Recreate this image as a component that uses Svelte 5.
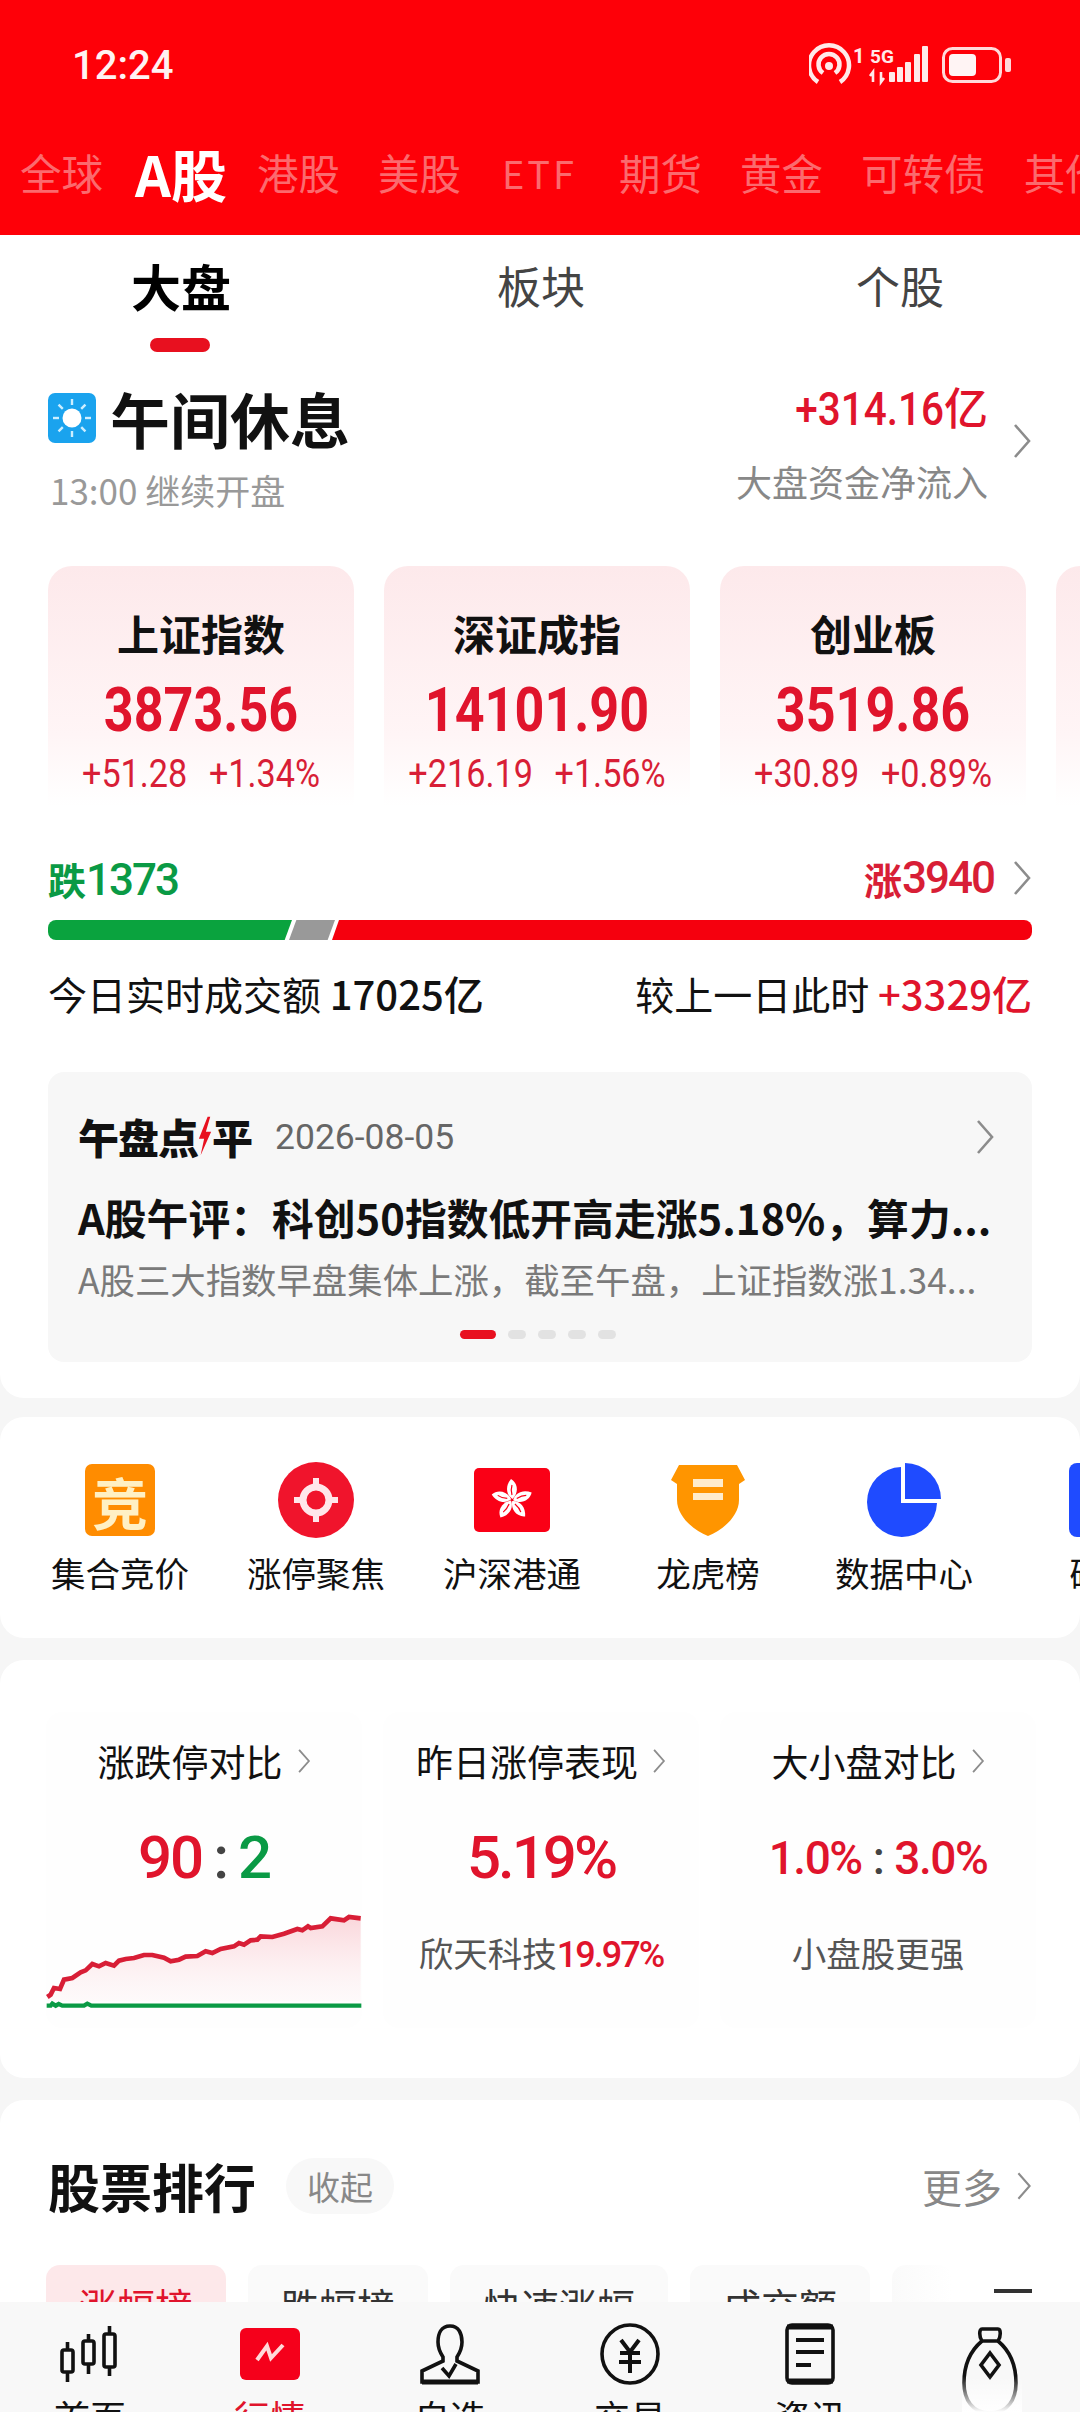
<script>
	const marketTabs = ['全球', 'A股', '港股', '美股', 'ETF', '期货', '黄金', '可转债', '其他'];
	const indexes = [
		{ name: '上证指数', value: '3873.56', diff: '+51.28', pct: '+1.34%' },
		{ name: '深证成指', value: '14101.90', diff: '+216.19', pct: '+1.56%' },
		{ name: '创业板', value: '3519.86', diff: '+30.89', pct: '+0.89%' },
		{ name: '科创50', value: '1402.11', diff: '+69.12', pct: '+5.18%' }
	];
	const rankTabs = ['涨幅榜', '跌幅榜', '快速涨幅', '成交额'];
	const dots = [0, 1, 2, 3];
	const line = '50,412 60,405 70,385 88,388 100,360 125,355 150,338 165,332 185,313 205,320 225,310 250,318 265,303 285,298 310,295 340,286 365,286 400,294 420,305 445,300 465,291 500,289 525,275 545,280 570,268 610,260 625,250 640,255 660,242 680,240 690,230 725,232 760,222 800,208 815,212 832,200 840,205 875,200 900,176 940,182 955,172 990,176';
	const petals = [0, 72, 144, 216, 288];
	const rays = [0, 45, 90, 135, 180, 225, 270, 315];
</script>

{#snippet chevron(w = 20, h = 36)}
	<svg class="chev" width={w} height={h} viewBox="0 0 20 36"><path d="M3 2 L17 18 L3 34" fill="none" stroke="#8c8c8c" stroke-width="2.6" /></svg>
{/snippet}

<div class="page">
	<header class="top">
		<div class="status">
			<span class="time">12:24</span>
			<svg class="status-icons" width="204" height="46" viewBox="808 42 204 46">
				<g fill="none" stroke="#ffe9e9" stroke-width="4.5">
					<path d="M817 82 A20 20 0 1 1 839 82" />
					<path d="M822 73 A10.500 10.500 0 1 1 834 73" />
				</g>
				<circle cx="828" cy="66" r="4" fill="#ffe9e9" />
				<text x="852" y="63" class="st1">1</text>
				<text x="869" y="63" class="st2">5G</text>
				<path d="M872 82V72l-3 4M880 72v10l3-4" fill="none" stroke="#ffe9e9" stroke-width="2.6" />
				<g fill="#ffe9e9">
					<rect x="888" y="72" width="6" height="10" rx="1" />
					<rect x="896" y="67" width="6" height="15" rx="1" />
					<rect x="904" y="62" width="6" height="20" rx="1" />
					<rect x="913" y="54" width="6" height="28" rx="1" />
					<rect x="921" y="46" width="6" height="36" rx="1" />
				</g>
				<rect x="942.5" y="48.500" width="57" height="33" rx="9" fill="none" stroke="#ffd9d9" stroke-width="3" />
				<rect x="948" y="54" width="27" height="22" rx="4" fill="#fff4f4" />
				<rect x="1004" y="58" width="6" height="14" rx="2" fill="#ffd9d9" />
			</svg>
		</div>
		<nav class="markets">
			{#each marketTabs as tab}
				<span class="market" class:on={tab === 'A股'} class:latin={tab === 'ETF'}>{tab}</span>
			{/each}
		</nav>
	</header>

	<section class="overview">
		<div class="subtabs">
			<div class="subtab on">大盘<i></i></div>
			<div class="subtab mid">板块</div>
			<div class="subtab">个股</div>
		</div>

		<div class="session">
			<div>
				<div class="session-title">
					<svg width="48" height="50" viewBox="0 0 48 50">
						<rect width="48" height="50" rx="7" fill="#1aa3ee" />
						<circle cx="24" cy="25" r="9.500" fill="#fff" />
						{#each rays as r}
							<rect x="22.800" y="6" width="2.400" height="6" fill="#cdeeff" transform="rotate({r} 24 25)" />
						{/each}
					</svg>
					<h1>午间休息</h1>
				</div>
				<p class="session-sub">13:00 继续开盘</p>
			</div>
			<div class="flow">
				<div>
					<div class="flow-num"><b>+314.16</b>亿</div>
					<div class="flow-label">大盘资金净流入</div>
				</div>
				{@render chevron()}
			</div>
		</div>

		<div class="cards">
			{#each indexes as item}
				<div class="card">
					<div class="card-name">{item.name}</div>
					<div class="card-value">{item.value}</div>
					<div class="card-sub"><span>{item.diff}</span><span>{item.pct}</span></div>
				</div>
			{/each}
		</div>

		<div class="breadth">
			<span class="fall">跌<b>1373</b></span>
			<span class="rise">涨<b>3940</b>{@render chevron()}</span>
		</div>
		<div class="bar">
			<i class="bar-green"></i>
			<i class="bar-gray"></i>
			<i class="bar-red"></i>
		</div>
		<div class="turnover">
			<span>今日实时成交额 <b>17025亿</b></span>
			<span>较上一日此时 <b class="red">+3329亿</b></span>
		</div>

		<div class="news">
			<div class="news-head">
				<span class="news-logo">午盘点<svg width="14" height="44" viewBox="0 0 16 44"><path d="M11 0L1 25H7L3 44L15 17H9L14 0Z" fill="#e8101f" /></svg>平</span>
				<span class="news-date">2026-08-05</span>
				<span class="news-chev">{@render chevron()}</span>
			</div>
			<div class="news-title">A股午评：科创50指数低开高走涨5.18%，算力...</div>
			<div class="news-text">A股三大指数早盘集体上涨，截至午盘，上证指数涨1.34...</div>
			<div class="news-dots">
				<i class="active"></i>
				{#each dots as d}<i></i>{/each}
			</div>
		</div>
	</section>

	<section class="tools">
		<div class="tool">
			<div class="tool-icon"><span class="jing">竞</span></div>
			<span>集合竞价</span>
		</div>
		<div class="tool">
			<div class="tool-icon">
				<svg width="76" height="78" viewBox="0 0 76 78">
					<circle cx="38" cy="39" r="38" fill="#f0142c" />
					<circle cx="38" cy="39" r="13" fill="none" stroke="#ffe6ea" stroke-width="7" />
					<path d="M38 17v10M38 51v10M16 39h10M50 39h10" stroke="#ffe6ea" stroke-width="6" />
				</svg>
			</div>
			<span>涨停聚焦</span>
		</div>
		<div class="tool">
			<div class="tool-icon">
				<svg width="76" height="64" viewBox="0 0 76 64">
					<rect width="76" height="64" rx="5" fill="#fa0016" />
					{#each petals as r}
						<g transform="rotate({r} 38 32)">
							<path d="M38.500 31 C32 27 31 18 37 11 C44 15 45 25 38.500 31Z" fill="#fff" />
							<path d="M38 27 C37 23 37 20 38 17" fill="none" stroke="#fa0016" stroke-width="1.200" />
						</g>
					{/each}
				</svg>
			</div>
			<span>沪深港通</span>
		</div>
		<div class="tool">
			<div class="tool-icon">
				<svg width="74" height="72" viewBox="0 0 74 72">
					<path d="M8 1H66L74 16L68 20V36C68 52 52 66 37 72C22 66 6 52 6 36V20L0 16Z" fill="#ff9500" />
					<rect x="22" y="15" width="30" height="8" fill="#ffeccc" />
					<rect x="22" y="29" width="30" height="7" fill="#ffeccc" />
				</svg>
			</div>
			<span>龙虎榜</span>
		</div>
		<div class="tool">
			<div class="tool-icon">
				<svg width="74" height="74" viewBox="0 0 74 74">
					<path d="M34 4A35 35 0 1 0 70 40H34Z" fill="#1f4bff" />
					<path d="M38 0A36 36 0 0 1 74 36H38Z" fill="#1f4bff" />
				</svg>
			</div>
			<span>数据中心</span>
		</div>
		<div class="tool last">
			<div class="tool-icon"><span class="blue-box"></span></div>
			<span>破净</span>
		</div>
	</section>

	<section class="compare">
		<div class="cmp">
			<div class="cmp-title">涨跌停对比{@render chevron(14, 28)}</div>
			<div class="cmp-value big"><span class="red">90</span><span class="colon">:</span><span class="green">2</span></div>
			<svg class="spark" width="316" height="100" viewBox="46 160 948 300" preserveAspectRatio="none">
				<defs>
					<linearGradient id="spark-fill" x1="0" y1="0" x2="0" y2="1">
						<stop offset="0" stop-color="#f9c9cf" stop-opacity="0.75" />
						<stop offset="1" stop-color="#fdeef0" stop-opacity="0.25" />
					</linearGradient>
				</defs>
				<polygon points="50,425 {line} 990,425" fill="url(#spark-fill)" />
				<polyline points={line} fill="none" stroke="#d81e36" stroke-width="14" />
				<path d="M48 438 H60 L65 432 L75 438 L84 433 L95 438 H160 L170 432 L182 438 H992" fill="none" stroke="#0a9a45" stroke-width="13" />
			</svg>
		</div>
		<div class="cmp">
			<div class="cmp-title">昨日涨停表现{@render chevron(14, 28)}</div>
			<div class="cmp-value big tight red">5.19%</div>
			<div class="cmp-note">欣天科技<b class="red">19.97%</b></div>
		</div>
		<div class="cmp">
			<div class="cmp-title">大小盘对比{@render chevron(14, 28)}</div>
			<div class="cmp-value mid"><span class="red">1.0%</span><span class="colon">:</span><span class="red">3.0%</span></div>
			<div class="cmp-note">小盘股更强</div>
		</div>
	</section>

	<section class="ranking">
		<div class="rank-head">
			<h2>股票排行</h2>
			<span class="collapse">收起</span>
			<span class="more">更多{@render chevron(16, 32)}</span>
		</div>
		<div class="rank-tabs">
			{#each rankTabs as tab, i}
				<span class="rank-tab" class:on={i === 0}>{tab}</span>
			{/each}
			<span class="rank-tab stub"></span>
			<span class="rank-menu"></span>
		</div>
	</section>

	<footer class="bottom">
		<div class="nav-item">
			<svg width="60" height="56" viewBox="0 0 60 56" fill="none" stroke="#111" stroke-width="3.600">
				<rect x="2" y="24" width="11" height="22" rx="2" /><path d="M7.500 16V24M7.500 46V56" />
				<rect x="23" y="15" width="11" height="23" rx="2" /><path d="M28.500 8V15M28.500 38V48" />
				<rect x="44" y="8" width="11" height="33" rx="2" /><path d="M49.500 0V8M49.500 41V50" />
			</svg>
			<span>首页</span>
		</div>
		<div class="nav-item on">
			<svg width="60" height="52" viewBox="0 0 60 52">
				<rect width="60" height="52" rx="6" fill="#f5001b" />
				<path d="M17 32 L27 18 L31 30 L43 17" fill="none" stroke="#ffdada" stroke-width="4" />
			</svg>
			<span>行情</span>
		</div>
		<div class="nav-item">
			<svg width="60" height="60" viewBox="0 0 60 60" fill="none" stroke="#111" stroke-width="3.600">
				<path d="M30 2C21 2 18 10 18 18C18 25 21 30 23 33V37L2 47V58H58V47L37 37V33C39 30 42 25 42 18C42 10 39 2 30 2Z" />
				<path d="M22 44L29 52L36 40" />
				<path d="M2 58H58" stroke-width="5" />
			</svg>
			<span>自选</span>
		</div>
		<div class="nav-item">
			<svg width="60" height="62" viewBox="0 0 60 62" fill="none" stroke="#111" stroke-width="3.600">
				<ellipse cx="30" cy="31" rx="28" ry="29" />
				<path d="M21 17L30 29L39 17M20 30H40M19 39H41M30 29V50" stroke-width="4" />
			</svg>
			<span>交易</span>
		</div>
		<div class="nav-item">
			<svg width="50" height="62" viewBox="0 0 50 62" fill="none" stroke="#111" stroke-width="3.600">
				<rect x="2" y="2" width="46" height="58" rx="5" />
				<path d="M2 4H48M2 58H48" stroke-width="5" />
				<path d="M11 17H39M11 29H39M11 42H26" stroke-width="4" />
			</svg>
			<span>资讯</span>
		</div>
		<div class="nav-item">
			<svg class="bag" width="56" height="88" viewBox="0 0 56 88" fill="none" stroke="#111" stroke-width="3.600">
				<path d="M20 2H36C39 2 39 10 36 14H20C17 10 17 2 20 2Z" />
				<path d="M20 14C8 24 2 38 2 56C2 72 10 86 28 86C46 86 54 72 54 56C54 38 48 24 36 14" />
				<path d="M28 26L37 38L28 50L19 38Z" />
			</svg>
		</div>
		<div class="mark"></div>
	</footer>
</div>

<style>
	:global(body) { margin: 0; background: #f6f6f6; }
	.page {
		position: relative; width: 1080px; height: 2412px; overflow: hidden; background: #f6f6f6;
		font-family: "Noto Sans CJK SC", "Noto Sans", sans-serif; color: #111;
	}
	h1, h2, p { margin: 0; font: inherit; }
	.red { color: #e0142c; }
	.green { color: #0a9a45; }
	.chev { flex: none; display: block; }

	.top { height: 235px; background: #fe0008; box-sizing: border-box; padding-top: 42px; }
	.status { display: flex; justify-content: space-between; align-items: center; height: 46px; padding: 0 67px 0 72px; }
	.time { font-family: Roboto, sans-serif; font-size: 40px; font-weight: 500; color: #fff2f2; }
	.st1, .st2 { font-family: Roboto, sans-serif; font-weight: 700; fill: #ffe9e9; }
	.st1 { font-size: 20px; }
	.st2 { font-size: 19px; }
	.markets { display: flex; align-items: center; gap: 38px; height: 86px; margin-top: 41px; padding-left: 20px; overflow: hidden; white-space: nowrap; }
	.market { flex: none; font-size: 41.500px; color: #fb6a6e; }
	.market.latin { font-size: 38px; letter-spacing: 3px; margin: 0 4px 0 3px; }
	.market.on { font-size: 56px; font-weight: 700; color: #fff; margin: 0 -8px 0 -6px; }

	.overview { background: #fff; height: 1163px; border-radius: 0 0 24px 24px; padding: 0 48px; box-sizing: border-box; }
	.subtabs { display: flex; justify-content: space-between; height: 128px; padding: 0 88px 0 83px; box-sizing: border-box; }
	.subtab { position: relative; font-size: 44px; line-height: 101px; color: #444; }
	.subtab.mid { margin-right: 5px; }
	.subtab.on { font-size: 50px; font-weight: 700; color: #000; }
	.subtab i { position: absolute; left: 19px; top: 103px; width: 60px; height: 14px; border-radius: 7px; background: #e8101f; }

	.session { display: flex; justify-content: space-between; height: 203px; padding-top: 25px; box-sizing: border-box; }
	.session-title { display: flex; align-items: center; gap: 14px; height: 60px; }
	.session-title h1 { font-size: 60px; font-weight: 700; line-height: 60px; }
	.session-sub { margin-top: 17px; padding-left: 2px; font-size: 35px; line-height: 50px; color: #999; }
	.flow { display: flex; align-items: center; gap: 24px; height: 150px; margin-top: -22px; }
	.flow > div { text-align: right; }
	.flow-num { font-size: 44px; line-height: 60px; font-weight: 500; color: #e0142c; }
	.flow-num b { display: inline-block; font-family: Roboto, sans-serif; font-size: 46px; font-weight: 500; transform: scaleX(.88); transform-origin: right; }
	.flow-label { margin-top: 17px; font-size: 36px; line-height: 50px; color: #888; }

	.cards { display: flex; gap: 30px; height: 240px; width: 1100px; }
	.card {
		flex: none; width: 306px; box-sizing: border-box; padding-top: 38px; text-align: center;
		border-radius: 24px 24px 0 0; background: linear-gradient(#fde9eb, #fff5f6 70%, #fff);
	}
	.card-name { font-size: 42px; font-weight: 700; line-height: 58px; }
	.card-value { font-family: Roboto, sans-serif; font-size: 62px; font-weight: 700; line-height: 70px; margin-top: 13px; color: #e0142c; transform: scaleX(.84); }
	.card-sub { display: flex; justify-content: center; gap: 24px; margin-top: 7px; font-family: Roboto, sans-serif; font-size: 38px; line-height: 44px; color: #d81e36; white-space: nowrap; transform: scaleX(.9); }

	.breadth { display: flex; justify-content: space-between; align-items: center; height: 60px; margin-top: 42px; font-size: 38px; font-weight: 700; }
	.breadth b { font-family: Roboto, sans-serif; font-size: 44px; font-weight: 500; letter-spacing: -2px; }
	.fall { color: #0a9a45; }
	.rise { display: flex; align-items: center; color: #d81e36; }
	.rise :global(.chev) { margin-left: 18px; }
	.bar { display: flex; height: 20px; margin-top: 12px; gap: 0; }
	.bar i { display: block; height: 20px; }
	.bar-green { width: 244px; background: #0aa33e; border-radius: 8px 0 0 8px; clip-path: polygon(0 0, 100% 0, 97% 100%, 0 100%); }
	.bar-gray { width: 46px; margin-left: -3px; background: #999; clip-path: polygon(16% 0, 100% 0, 84% 100%, 0 100%); }
	.bar-red { flex: 1; margin-left: -3px; background: #f5000e; border-radius: 0 8px 8px 0; clip-path: polygon(1% 0, 100% 0, 100% 100%, 0 100%); }
	.turnover { display: flex; justify-content: space-between; align-items: center; height: 60px; margin-top: 23px; font-size: 39px; }
	.turnover b { font-size: 40px; font-weight: 500; }

	.news { height: 290px; margin-top: 49px; padding: 0 30px; box-sizing: border-box; border-radius: 16px; background: #f7f7f7; }
	.news-head { display: flex; align-items: center; height: 130px; }
	.news-logo { display: flex; align-items: center; font-size: 41px; font-weight: 900; letter-spacing: -1px; margin-top: -2px; }
	.news-date { margin-left: 23px; font-family: Roboto, sans-serif; font-size: 35.500px; color: #666; }
	.news-chev { margin-left: auto; margin-right: 7px; }
	.news-title { margin-top: -20px; font-size: 41.800px; font-weight: 700; line-height: 70px; white-space: nowrap; }
	.news-text { margin-top: -4px; font-size: 35.400px; line-height: 62px; color: #7a7a7a; white-space: nowrap; }
	.news-dots { display: flex; justify-content: center; align-items: center; gap: 12px; height: 20px; margin-top: 14px; padding-right: 4px; }
	.news-dots i { width: 18px; height: 9px; border-radius: 5px; background: #e2e2e2; }
	.news-dots i.active { width: 36px; background: #e8101f; }

	.tools { display: flex; height: 221px; margin-top: 19px; padding-left: 22px; overflow: hidden; background: #fff; border-radius: 24px; }
	.tool { flex: none; width: 196px; display: flex; flex-direction: column; align-items: center; font-size: 34.500px; white-space: nowrap; }
	.tool.last { margin-left: 4px; }
	.tool-icon { display: flex; align-items: center; justify-content: center; height: 78px; margin-top: 44px; margin-bottom: 8px; }
	.jing { display: flex; align-items: center; justify-content: center; width: 70px; height: 72px; border-radius: 7px; background: #ff8c00; font-size: 56px; font-weight: 700; color: #fff0c4; }
	.blue-box { display: block; width: 70px; height: 74px; border-radius: 8px; background: #1f4bff; }

	.compare { display: grid; grid-template-columns: repeat(3, 316px); gap: 21px; height: 418px; margin-top: 22px; padding: 52px 23px 0 46px; box-sizing: border-box; background: #fff; border-radius: 24px; }
	.cmp { height: 316px; background: #fefefe; border-radius: 16px; text-align: center; }
	.cmp-title { display: flex; justify-content: center; align-items: center; gap: 14px; height: 56px; margin-top: 21px; font-size: 37px; }
	.cmp-value { height: 70px; line-height: 70px; margin-top: 34px; font-family: Roboto, sans-serif; font-weight: 500; }
	.cmp-value.big { font-size: 60px; letter-spacing: -2px; }
	.cmp-value.tight { letter-spacing: -3px; }
	.cmp-value.mid { font-size: 46px; letter-spacing: -1.500px; }
	.colon { margin: 0 11px; color: #444; }
	.cmp-note { margin-top: 34px; font-size: 34.500px; line-height: 50px; color: #555; white-space: nowrap; }
	.cmp-note b { font-family: Roboto, sans-serif; font-size: 36px; font-weight: 500; letter-spacing: -2px; }
	.spark { display: block; margin-top: 20px; }

	.ranking { height: 320px; margin-top: 22px; padding: 58px 48px 0; box-sizing: border-box; background: #fff; border-radius: 24px 24px 0 0; }
	.rank-head { display: flex; align-items: center; height: 56px; }
	.rank-head h2 { font-size: 52px; font-weight: 700; line-height: 56px; }
	.collapse { margin-left: 30px; width: 108px; height: 56px; line-height: 56px; text-align: center; border-radius: 28px; background: #f8f8f8; font-size: 33px; color: #888; }
	.more { display: flex; align-items: center; gap: 14px; margin-left: auto; font-size: 40px; color: #888; }
	.rank-tabs { position: relative; display: flex; gap: 22px; margin: 51px 0 0 -2px; overflow: hidden; }
	.rank-tab { flex: none; height: 80px; padding: 12px 33px 0; box-sizing: border-box; border-radius: 14px; background: #fafafa; font-size: 38px; line-height: 56px; color: #333; }
	.rank-tab.on { background: #fde8ea; color: #e0142c; }
	.rank-tab.stub { width: 60px; padding: 0; background: linear-gradient(90deg, #fafafa, #fff); }
	.rank-menu { position: absolute; right: 0; top: 24px; width: 38px; height: 4px; background: #333; }

	.bottom {
		position: absolute; left: 0; bottom: 0; display: flex; width: 1080px; height: 110px; overflow: hidden;
		background: #f8f8f8;
	}
	.nav-item { position: relative; flex: none; width: 180px; display: flex; flex-direction: column; align-items: center; padding-top: 21px; box-sizing: border-box; }
	.nav-item svg { height: 62px; flex: none; }
	.nav-item svg.bag { height: 88px; margin-top: 4px; }
	.nav-item span { position: absolute; top: 88px; font-size: 36px; line-height: 52px; color: #111; }
	.nav-item.on span { color: #e0142c; }
	.mark { position: absolute; right: 58px; bottom: 0; width: 60px; height: 36px; background: linear-gradient(transparent, #fff); }
</style>
